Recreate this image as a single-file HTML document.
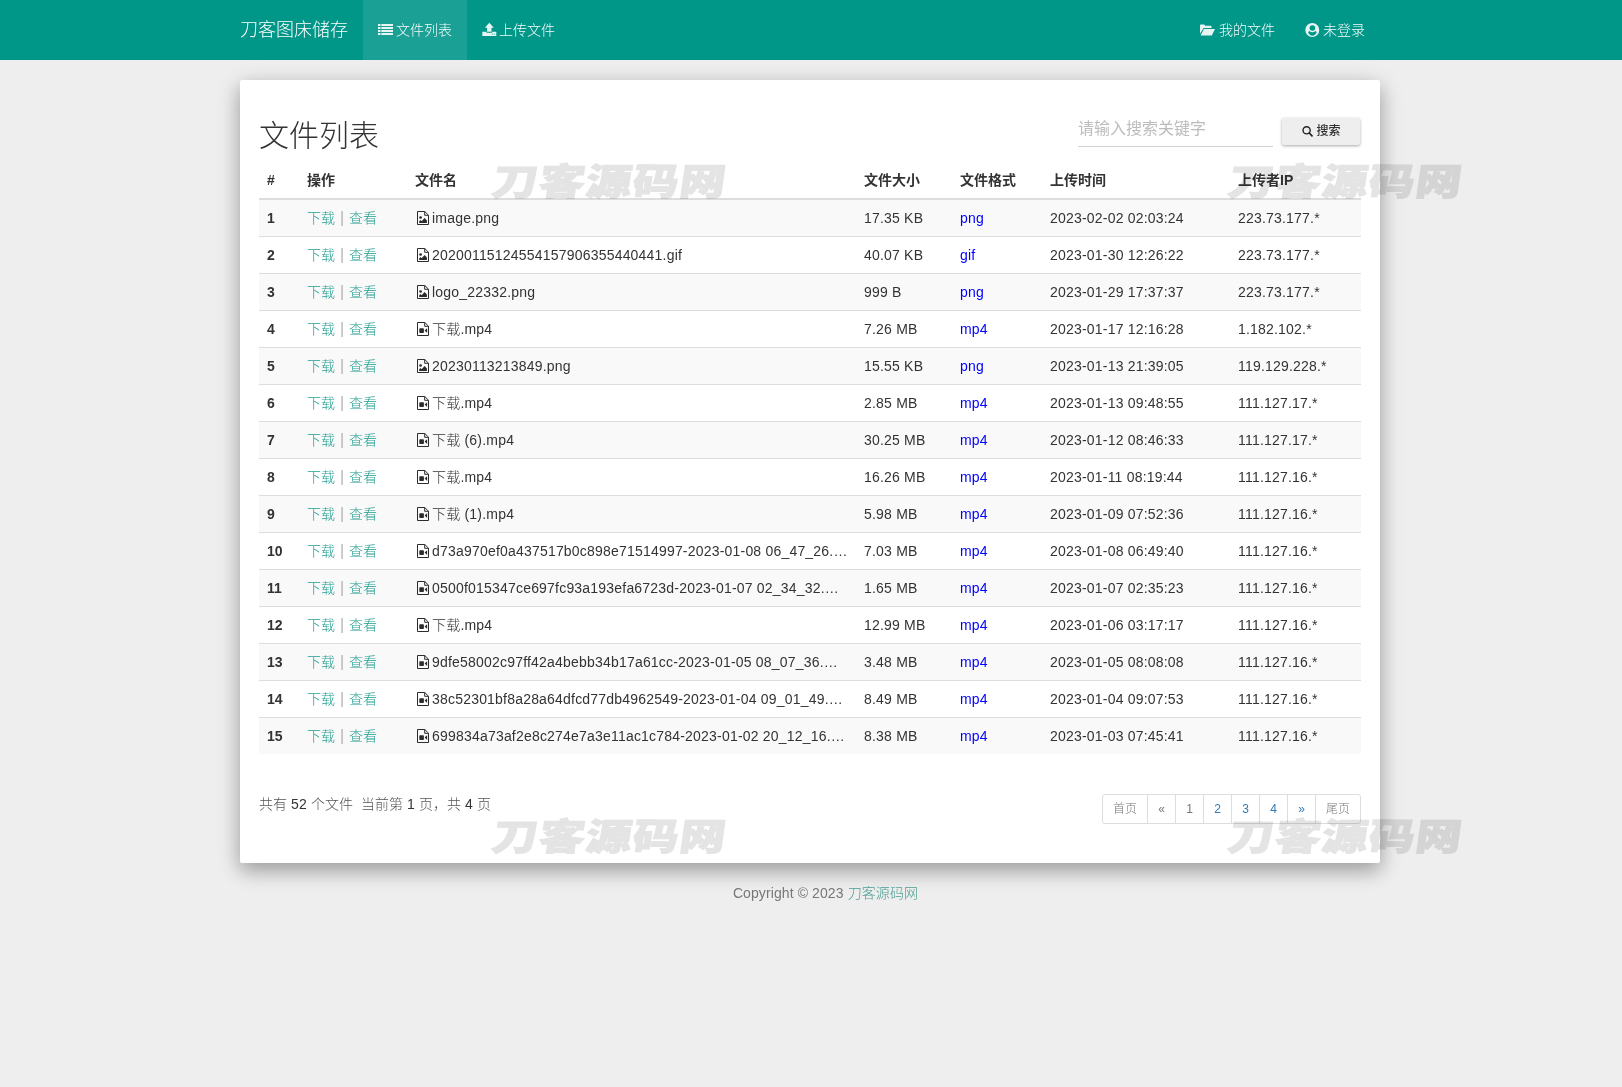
<!DOCTYPE html>
<html lang="zh-CN">
<head>
<meta charset="utf-8">
<title>文件列表 - 刀客图床储存</title>
<style>
*{box-sizing:border-box}
html,body{margin:0;padding:0}
body{width:1622px;height:1087px;overflow:hidden;background:#eeeeee;font-family:"Liberation Sans","Noto Sans CJK SC",sans-serif;font-size:14px;line-height:20px;color:#333;position:relative}
a{text-decoration:none}
.navbar{position:absolute;left:0;top:0;width:1622px;height:60px;background:#009688;color:#fff}
.brand{position:absolute;left:240px;top:1px;height:60px;line-height:59px;font-size:18px;color:#ffffff;font-weight:300}
.nav a{position:absolute;top:0;height:60px;line-height:60px;color:#f4fbfa;font-size:14px;font-weight:300;white-space:nowrap}
.nav a svg{display:inline-block;vertical-align:middle;position:relative;top:-1px;margin-right:4px;fill:#e6f4f2}
.nav a.active{background:rgba(255,255,255,0.1)}
.panel{position:absolute;left:240px;top:80px;width:1140px;height:783px;background:#fff;box-shadow:0 8px 18px rgba(0,0,0,0.2),0 6px 24px rgba(0,0,0,0.19);border-radius:2px}
h1{position:absolute;left:259px;top:114px;margin:0;font-size:30px;font-weight:300;line-height:44px;color:#333;white-space:nowrap}
.search{position:absolute;left:1078px;top:117px;width:195px;height:30px;border-bottom:1px solid #d2d2d2;color:#bcbcbc;font-size:16px;font-weight:400;line-height:24px;white-space:nowrap}
.btn{position:absolute;left:1282px;top:118px;width:78px;height:27px;background:#eeeeee;border-radius:2px;box-shadow:0 1px 3px rgba(0,0,0,0.35);font-size:12px;font-weight:500;line-height:27px;color:#333;text-align:center;white-space:nowrap}
.btn svg{vertical-align:middle;position:relative;top:-1px;margin-right:3px}
table{position:absolute;left:259px;top:162px;width:1102px;border-collapse:collapse;table-layout:fixed}
th,td{padding:0 8px;text-align:left;white-space:nowrap;overflow:visible;vertical-align:middle}
th{height:37px;border-bottom:2px solid #ddd;font-weight:bold;font-size:14px;padding-bottom:0}
td{height:37px;border-top:1px solid #ddd}
tbody tr:first-child td{height:37px;border-top:0}
tbody tr:nth-child(odd){background:#f9f9f9}
td.n{font-weight:bold}
td.op{color:#aaa;font-weight:300;word-spacing:1.3px}
td.l{letter-spacing:.2px}
td.fn{font-weight:300}
td.op a{color:#1f9d90}
td.op i{font-style:normal;display:inline-block;transform:scaleY(1.14);transform-origin:50% 88%}
td.fmt a{color:#0000ff}
td.fn svg{vertical-align:middle;position:relative;top:-1px;margin-left:2px;margin-right:3px}
.stat{position:absolute;left:259px;top:794px;font-size:14px;color:#555;font-weight:300;white-space:nowrap;word-spacing:.1px}
.stat b{font-weight:normal;color:#333;letter-spacing:.2px}
.pg{position:absolute;left:1102px;top:794px;height:30px;display:flex}
.pg a{display:block;height:30px;line-height:28px;border:1px solid #ddd;margin-left:-1px;font-size:12px;color:#337ab7;text-align:center;background:#fff}
.pg a.d{color:#777;font-weight:300}
.pg a:first-child{margin-left:0;border-radius:3px 0 0 3px}
.pg a:last-child{border-radius:0 3px 3px 0}
.foot{position:absolute;left:0;top:883px;letter-spacing:.1px;width:1651px;text-align:center;font-size:14px;color:#777;white-space:nowrap}
.foot a{color:#4a9d92;font-weight:300}
.wm{position:absolute;font-family:"Noto Sans CJK SC",sans-serif;font-weight:900;font-size:37px;line-height:40px;color:#e4e4e4;-webkit-text-stroke:1px #e4e4e4;mix-blend-mode:multiply;white-space:nowrap;letter-spacing:0.8px;pointer-events:none;transform-origin:0 100%;transform:scaleX(1.24) skewX(-6.5deg)}
</style>
</head>
<body>
<div class="navbar">
  <div class="brand">刀客图床储存</div>
  <div class="nav">
    <a class="active" style="left:363px;width:104px;padding-left:15px"><svg width="15" height="12" viewBox="0 0 15 12" style="top:-2px;margin-left:0;margin-right:3px"><path d="M0 1h2.500v2H0zM3.300 1H15v2H3.300zM0 4h2.500v2H0zM3.300 4H15v2H3.300zM0 7h2.500v2H0zM3.300 7H15v2H3.300zM0 10h2.500v2H0zM3.300 10H15v2H3.300z"/></svg>文件列表</a>
    <a style="left:482px"><svg width="15" height="14" viewBox="0 0 15 14" style="top:-2px;margin-left:0;margin-right:2px"><path d="M7.300.8l4.500 5H9.500v4H5.100v-4H2.800zM.3 9.800h4.200v1h5.600v-1h4.200V14H.3zM10 11.800h.9v.8H10zM11.800 11.800h.9v.8h-.9z" fill-rule="evenodd"/></svg>上传文件</a>
    <a style="left:1200px"><svg width="15" height="12" viewBox="0 0 15 12"><path d="M0 1.5C0 .9.5.5 1 .5h3.2l1 1.3h5.300c.6 0 1 .4 1 1V4H3.600L0 9.800zM3.900 5H15l-3.200 6.500H.600z"/></svg>我的文件</a>
    <a style="left:1305px"><svg width="15" height="14" viewBox="0 0 15 14" style="margin-right:3px"><path fill-rule="evenodd" d="M7.300 0a7 7 0 1 1 0 14a7 7 0 0 1 0-14zM7.400 2.200a2.800 2.800 0 1 0 0 5.600a2.800 2.800 0 0 0 0-5.600zM3.200 9.600C3.400 8.800 3.900 8.200 4.500 8.100C5.300 8.900 6.300 9.300 7.400 9.300C8.500 9.300 9.500 8.900 10.300 8.100C10.900 8.200 11.400 8.800 11.600 9.600C10.500 13.700 4.300 13.700 3.200 9.600z"/></svg>未登录</a>
  </div>
</div>
<div class="panel"></div>
<h1>文件列表</h1>
<div class="search">请输入搜索关键字</div>
<div class="btn"><svg width="12" height="12" viewBox="0 0 12 12"><circle cx="5.600" cy="5.300" r="3.600" fill="none" stroke="#222" stroke-width="1.400"/><path d="M8.300 8L11 10.800" stroke="#222" stroke-width="1.700" stroke-linecap="round"/></svg>搜索</div>
<table>
<colgroup><col style="width:40px"><col style="width:108px"><col style="width:449px"><col style="width:96px"><col style="width:90px"><col style="width:188px"><col style="width:131px"></colgroup>
<thead><tr><th>#</th><th>操作</th><th>文件名</th><th>文件大小</th><th>文件格式</th><th>上传时间</th><th>上传者IP</th></tr></thead>
<tbody id="tb">
<tr><td class="n">1</td><td class="op"><a>下载</a> <i>|</i> <a>查看</a></td><td class="fn l"><svg width="12" height="14" viewBox="0 0 12 14"><path d="M.5.5h7.300l3.700 3.700v9.300H.5z" fill="none" stroke="#2b2b2b" stroke-width="1"/><path d="M7.700.5v3.800h3.800" fill="none" stroke="#2b2b2b" stroke-width="1"/><circle cx="3.600" cy="6.500" r="1.350" fill="#2b2b2b"/><path d="M2.200 11.900V10.300l1.300-1.200 1.100 1.100 3-3.100 2.300 2.400v2.400z" fill="#2b2b2b"/></svg>image.png</td><td class="l">17.35 KB</td><td class="fmt l"><a>png</a></td><td class="l">2023-02-02 02:03:24</td><td class="l">223.73.177.*</td></tr>
<tr><td class="n">2</td><td class="op"><a>下载</a> <i>|</i> <a>查看</a></td><td class="fn l"><svg width="12" height="14" viewBox="0 0 12 14"><path d="M.5.5h7.300l3.700 3.700v9.300H.5z" fill="none" stroke="#2b2b2b" stroke-width="1"/><path d="M7.700.5v3.800h3.800" fill="none" stroke="#2b2b2b" stroke-width="1"/><circle cx="3.600" cy="6.500" r="1.350" fill="#2b2b2b"/><path d="M2.200 11.900V10.300l1.300-1.200 1.100 1.100 3-3.100 2.300 2.400v2.400z" fill="#2b2b2b"/></svg>20200115124554157906355440441.gif</td><td class="l">40.07 KB</td><td class="fmt l"><a>gif</a></td><td class="l">2023-01-30 12:26:22</td><td class="l">223.73.177.*</td></tr>
<tr><td class="n">3</td><td class="op"><a>下载</a> <i>|</i> <a>查看</a></td><td class="fn l"><svg width="12" height="14" viewBox="0 0 12 14"><path d="M.5.5h7.300l3.700 3.700v9.300H.5z" fill="none" stroke="#2b2b2b" stroke-width="1"/><path d="M7.700.5v3.800h3.800" fill="none" stroke="#2b2b2b" stroke-width="1"/><circle cx="3.600" cy="6.500" r="1.350" fill="#2b2b2b"/><path d="M2.200 11.900V10.300l1.300-1.200 1.100 1.100 3-3.100 2.300 2.400v2.400z" fill="#2b2b2b"/></svg>logo_22332.png</td><td class="l">999 B</td><td class="fmt l"><a>png</a></td><td class="l">2023-01-29 17:37:37</td><td class="l">223.73.177.*</td></tr>
<tr><td class="n">4</td><td class="op"><a>下载</a> <i>|</i> <a>查看</a></td><td class="fn l"><svg width="12" height="14" viewBox="0 0 12 14"><path d="M.5.5h7.300l3.700 3.700v9.300H.5z" fill="none" stroke="#2b2b2b" stroke-width="1"/><path d="M7.700.5v3.800h3.800" fill="none" stroke="#2b2b2b" stroke-width="1"/><rect x="2.300" y="6.200" width="4.600" height="4.800" rx=".8" fill="#2b2b2b"/><path d="M7.600 8.600L10.100 6.300v4.600z" fill="#2b2b2b"/></svg>下载.mp4</td><td class="l">7.26 MB</td><td class="fmt l"><a>mp4</a></td><td class="l">2023-01-17 12:16:28</td><td class="l">1.182.102.*</td></tr>
<tr><td class="n">5</td><td class="op"><a>下载</a> <i>|</i> <a>查看</a></td><td class="fn l"><svg width="12" height="14" viewBox="0 0 12 14"><path d="M.5.5h7.300l3.700 3.700v9.300H.5z" fill="none" stroke="#2b2b2b" stroke-width="1"/><path d="M7.700.5v3.800h3.800" fill="none" stroke="#2b2b2b" stroke-width="1"/><circle cx="3.600" cy="6.500" r="1.350" fill="#2b2b2b"/><path d="M2.200 11.900V10.300l1.300-1.200 1.100 1.100 3-3.100 2.300 2.400v2.400z" fill="#2b2b2b"/></svg>20230113213849.png</td><td class="l">15.55 KB</td><td class="fmt l"><a>png</a></td><td class="l">2023-01-13 21:39:05</td><td class="l">119.129.228.*</td></tr>
<tr><td class="n">6</td><td class="op"><a>下载</a> <i>|</i> <a>查看</a></td><td class="fn l"><svg width="12" height="14" viewBox="0 0 12 14"><path d="M.5.5h7.300l3.700 3.700v9.300H.5z" fill="none" stroke="#2b2b2b" stroke-width="1"/><path d="M7.700.5v3.800h3.800" fill="none" stroke="#2b2b2b" stroke-width="1"/><rect x="2.300" y="6.200" width="4.600" height="4.800" rx=".8" fill="#2b2b2b"/><path d="M7.600 8.600L10.100 6.300v4.600z" fill="#2b2b2b"/></svg>下载.mp4</td><td class="l">2.85 MB</td><td class="fmt l"><a>mp4</a></td><td class="l">2023-01-13 09:48:55</td><td class="l">111.127.17.*</td></tr>
<tr><td class="n">7</td><td class="op"><a>下载</a> <i>|</i> <a>查看</a></td><td class="fn l"><svg width="12" height="14" viewBox="0 0 12 14"><path d="M.5.5h7.300l3.700 3.700v9.300H.5z" fill="none" stroke="#2b2b2b" stroke-width="1"/><path d="M7.700.5v3.800h3.800" fill="none" stroke="#2b2b2b" stroke-width="1"/><rect x="2.300" y="6.200" width="4.600" height="4.800" rx=".8" fill="#2b2b2b"/><path d="M7.600 8.600L10.100 6.300v4.600z" fill="#2b2b2b"/></svg>下载 (6).mp4</td><td class="l">30.25 MB</td><td class="fmt l"><a>mp4</a></td><td class="l">2023-01-12 08:46:33</td><td class="l">111.127.17.*</td></tr>
<tr><td class="n">8</td><td class="op"><a>下载</a> <i>|</i> <a>查看</a></td><td class="fn l"><svg width="12" height="14" viewBox="0 0 12 14"><path d="M.5.5h7.300l3.700 3.700v9.300H.5z" fill="none" stroke="#2b2b2b" stroke-width="1"/><path d="M7.700.5v3.800h3.800" fill="none" stroke="#2b2b2b" stroke-width="1"/><rect x="2.300" y="6.200" width="4.600" height="4.800" rx=".8" fill="#2b2b2b"/><path d="M7.600 8.600L10.100 6.300v4.600z" fill="#2b2b2b"/></svg>下载.mp4</td><td class="l">16.26 MB</td><td class="fmt l"><a>mp4</a></td><td class="l">2023-01-11 08:19:44</td><td class="l">111.127.16.*</td></tr>
<tr><td class="n">9</td><td class="op"><a>下载</a> <i>|</i> <a>查看</a></td><td class="fn l"><svg width="12" height="14" viewBox="0 0 12 14"><path d="M.5.5h7.300l3.700 3.700v9.300H.5z" fill="none" stroke="#2b2b2b" stroke-width="1"/><path d="M7.700.5v3.800h3.800" fill="none" stroke="#2b2b2b" stroke-width="1"/><rect x="2.300" y="6.200" width="4.600" height="4.800" rx=".8" fill="#2b2b2b"/><path d="M7.600 8.600L10.100 6.300v4.600z" fill="#2b2b2b"/></svg>下载 (1).mp4</td><td class="l">5.98 MB</td><td class="fmt l"><a>mp4</a></td><td class="l">2023-01-09 07:52:36</td><td class="l">111.127.16.*</td></tr>
<tr><td class="n">10</td><td class="op"><a>下载</a> <i>|</i> <a>查看</a></td><td class="fn l"><svg width="12" height="14" viewBox="0 0 12 14"><path d="M.5.5h7.300l3.700 3.700v9.300H.5z" fill="none" stroke="#2b2b2b" stroke-width="1"/><path d="M7.700.5v3.800h3.800" fill="none" stroke="#2b2b2b" stroke-width="1"/><rect x="2.300" y="6.200" width="4.600" height="4.800" rx=".8" fill="#2b2b2b"/><path d="M7.600 8.600L10.100 6.300v4.600z" fill="#2b2b2b"/></svg>d73a970ef0a437517b0c898e71514997-2023-01-08 06_47_26.…</td><td class="l">7.03 MB</td><td class="fmt l"><a>mp4</a></td><td class="l">2023-01-08 06:49:40</td><td class="l">111.127.16.*</td></tr>
<tr><td class="n">11</td><td class="op"><a>下载</a> <i>|</i> <a>查看</a></td><td class="fn l"><svg width="12" height="14" viewBox="0 0 12 14"><path d="M.5.5h7.300l3.700 3.700v9.300H.5z" fill="none" stroke="#2b2b2b" stroke-width="1"/><path d="M7.700.5v3.800h3.800" fill="none" stroke="#2b2b2b" stroke-width="1"/><rect x="2.300" y="6.200" width="4.600" height="4.800" rx=".8" fill="#2b2b2b"/><path d="M7.600 8.600L10.100 6.300v4.600z" fill="#2b2b2b"/></svg>0500f015347ce697fc93a193efa6723d-2023-01-07 02_34_32.…</td><td class="l">1.65 MB</td><td class="fmt l"><a>mp4</a></td><td class="l">2023-01-07 02:35:23</td><td class="l">111.127.16.*</td></tr>
<tr><td class="n">12</td><td class="op"><a>下载</a> <i>|</i> <a>查看</a></td><td class="fn l"><svg width="12" height="14" viewBox="0 0 12 14"><path d="M.5.5h7.300l3.700 3.700v9.300H.5z" fill="none" stroke="#2b2b2b" stroke-width="1"/><path d="M7.700.5v3.800h3.800" fill="none" stroke="#2b2b2b" stroke-width="1"/><rect x="2.300" y="6.200" width="4.600" height="4.800" rx=".8" fill="#2b2b2b"/><path d="M7.600 8.600L10.100 6.300v4.600z" fill="#2b2b2b"/></svg>下载.mp4</td><td class="l">12.99 MB</td><td class="fmt l"><a>mp4</a></td><td class="l">2023-01-06 03:17:17</td><td class="l">111.127.16.*</td></tr>
<tr><td class="n">13</td><td class="op"><a>下载</a> <i>|</i> <a>查看</a></td><td class="fn l"><svg width="12" height="14" viewBox="0 0 12 14"><path d="M.5.5h7.300l3.700 3.700v9.300H.5z" fill="none" stroke="#2b2b2b" stroke-width="1"/><path d="M7.700.5v3.800h3.800" fill="none" stroke="#2b2b2b" stroke-width="1"/><rect x="2.300" y="6.200" width="4.600" height="4.800" rx=".8" fill="#2b2b2b"/><path d="M7.600 8.600L10.100 6.300v4.600z" fill="#2b2b2b"/></svg>9dfe58002c97ff42a4bebb34b17a61cc-2023-01-05 08_07_36.…</td><td class="l">3.48 MB</td><td class="fmt l"><a>mp4</a></td><td class="l">2023-01-05 08:08:08</td><td class="l">111.127.16.*</td></tr>
<tr><td class="n">14</td><td class="op"><a>下载</a> <i>|</i> <a>查看</a></td><td class="fn l"><svg width="12" height="14" viewBox="0 0 12 14"><path d="M.5.5h7.300l3.700 3.700v9.300H.5z" fill="none" stroke="#2b2b2b" stroke-width="1"/><path d="M7.700.5v3.800h3.800" fill="none" stroke="#2b2b2b" stroke-width="1"/><rect x="2.300" y="6.200" width="4.600" height="4.800" rx=".8" fill="#2b2b2b"/><path d="M7.600 8.600L10.100 6.300v4.600z" fill="#2b2b2b"/></svg>38c52301bf8a28a64dfcd77db4962549-2023-01-04 09_01_49.…</td><td class="l">8.49 MB</td><td class="fmt l"><a>mp4</a></td><td class="l">2023-01-04 09:07:53</td><td class="l">111.127.16.*</td></tr>
<tr><td class="n">15</td><td class="op"><a>下载</a> <i>|</i> <a>查看</a></td><td class="fn l"><svg width="12" height="14" viewBox="0 0 12 14"><path d="M.5.5h7.300l3.700 3.700v9.300H.5z" fill="none" stroke="#2b2b2b" stroke-width="1"/><path d="M7.700.5v3.800h3.800" fill="none" stroke="#2b2b2b" stroke-width="1"/><rect x="2.300" y="6.200" width="4.600" height="4.800" rx=".8" fill="#2b2b2b"/><path d="M7.600 8.600L10.100 6.300v4.600z" fill="#2b2b2b"/></svg>699834a73af2e8c274e7a3e11ac1c784-2023-01-02 20_12_16.…</td><td class="l">8.38 MB</td><td class="fmt l"><a>mp4</a></td><td class="l">2023-01-03 07:45:41</td><td class="l">111.127.16.*</td></tr>
</tbody>
</table>
<div class="stat">共有 <b>52</b> 个文件&nbsp; 当前第 <b>1</b> 页，共 <b>4</b> 页</div>
<div class="pg"><a class="d" style="width:46px">首页</a><a class="d" style="width:29px">«</a><a class="d" style="width:29px">1</a><a style="width:29px">2</a><a style="width:29px">3</a><a style="width:29px">4</a><a style="width:29px">»</a><a class="d" style="width:46px">尾页</a></div>
<div class="foot">Copyright © 2023 <a>刀客源码网</a></div>
<div class="wm" style="left:490px;top:159px">刀客源码网</div>
<div class="wm" style="left:1226px;top:159px">刀客源码网</div>
<div class="wm" style="left:490px;top:814px">刀客源码网</div>
<div class="wm" style="left:1226px;top:814px">刀客源码网</div>
</body>
</html>
